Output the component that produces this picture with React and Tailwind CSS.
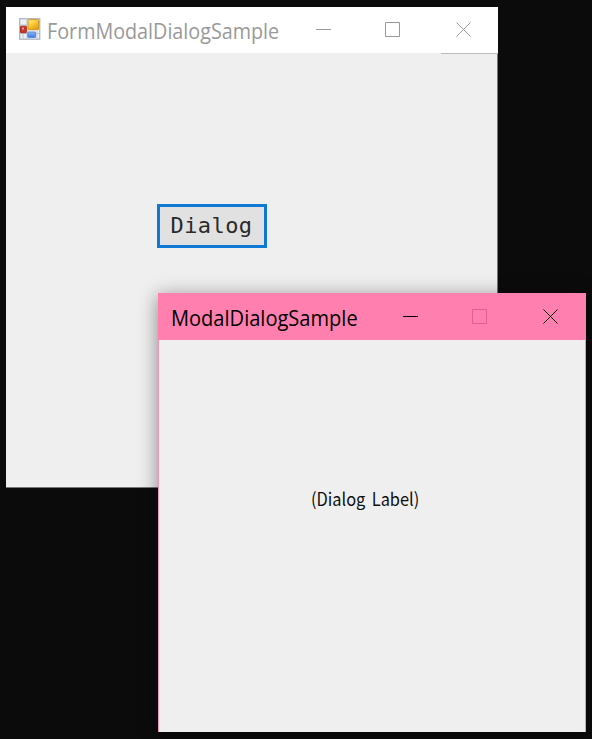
function FormIcon() {
  return (
    <svg className="h-[22px] w-[22px] shrink-0" viewBox="0 0 22 22">
      <defs>
        <linearGradient id="gold" x1="0" y1="0" x2="0.6" y2="1">
          <stop offset="0" stopColor="#fff3a8" />
          <stop offset="0.55" stopColor="#fbc72f" />
          <stop offset="1" stopColor="#dfa01c" />
        </linearGradient>
        <linearGradient id="blue" x1="0" y1="0" x2="0" y2="1">
          <stop offset="0" stopColor="#8bb8ff" />
          <stop offset="1" stopColor="#3e78dd" />
        </linearGradient>
      </defs>
      <rect x="0.7" y="0.7" width="20" height="20.5" fill="#eef1f5" stroke="#b3bac4" strokeWidth="1.4" />
      <path d="M8 1v20M1 7h7M1 15.500h20M4 15v6M18 13v8" stroke="#bfc5ce" strokeWidth="1" fill="none" />
      <rect x="9" y="1.700" width="10.500" height="10" rx="0.700" fill="url(#gold)" stroke="#cf951d" />
      <rect x="1.500" y="8.200" width="5.800" height="6.500" rx="0.500" fill="#c63a2e" stroke="#a82921" />
      <rect x="3" y="9.500" width="2" height="2" fill="#ef9a86" />
      <rect x="8.800" y="14" width="7.700" height="5.500" rx="0.500" fill="url(#blue)" stroke="#5b8cdb" />
    </svg>
  );
}

function CaptionButtons({ maximizeClass = "" }) {
  return (
    <div className="flex" shapeRendering="crispEdges">
      <svg className="h-[16px] w-[16px]" viewBox="0 0 16 16" fill="none" stroke="currentColor">
        <path d="M0 7.500h15" />
      </svg>
      <svg className={"ml-[53px] h-[16px] w-[16px] " + maximizeClass} viewBox="0 0 16 16" fill="none" stroke="currentColor">
        <path d="M0.500 0.500h14v14h-14z" />
      </svg>
      <svg className="ml-[55px] h-[16px] w-[16px]" viewBox="0 0 16 16" fill="none" stroke="currentColor">
        <path d="M0.500 0.500l14 14M14.500 0.500l-14 14" />
      </svg>
    </div>
  );
}

export default function App() {
  return (
    <div className="relative h-[739px] w-[592px] overflow-hidden bg-[#0b0b0b]">
      <section className="absolute left-[6px] top-[7px] flex h-[481px] w-[492px] flex-col border-b border-r border-[#777777] bg-[#efefef]">
        <header className="-mr-px flex h-[46px] shrink-0 bg-white pl-[13px] pt-[11px] text-[#999999]">
          <FormIcon />
          <h1 className="ml-[6px] w-[269px] origin-left scale-x-[0.94] whitespace-nowrap font-['Open_Sans',sans-serif] text-[21px] leading-[26px]">
            FormModalDialogSample
          </h1>
          <div className="pt-[4px]">
            <CaptionButtons />
          </div>
        </header>
        <div className="-mr-px h-px w-[57px] self-end bg-[#bcbcbc]" />
        <main className="flex pl-[151px] pt-[150px]">
          <button className="h-[44px] w-[110px] border-[3px] border-[#0f78d4] bg-[#e1e1e1] pb-px font-['DejaVu_Sans_Mono',monospace] text-[22px] leading-none tracking-[0.4px] text-[#2a2a2a]">
            <span className="-ml-px">Dialog</span>
          </button>
        </main>
      </section>

      <section className="absolute left-[158px] top-[293px] flex h-[439px] w-[428px] flex-col border-x border-[#f294b6] bg-[#efefef] shadow-[0_3px_18px_rgba(0,0,0,0.45)]">
        <header className="-mx-px flex h-[47px] shrink-0 bg-[#ff80ae] pl-[13px] pt-[12px] text-black">
          <h2 className="w-[232px] origin-left scale-x-[0.955] whitespace-nowrap font-['Open_Sans',sans-serif] text-[21px] leading-[26px]">
            ModalDialogSample
          </h2>
          <div className="pt-[4px]">
            <CaptionButtons maximizeClass="text-[#dc6290]" />
          </div>
        </header>
        <main className="pl-[152px] pt-[146px]">
          <p className="origin-left scale-x-[0.91] whitespace-nowrap font-['Noto_Sans_CJK_JP',sans-serif] text-[18px] leading-[24px] [word-spacing:3px] text-[#101010]">
            (Dialog Label)
          </p>
        </main>
      </section>
    </div>
  );
}
